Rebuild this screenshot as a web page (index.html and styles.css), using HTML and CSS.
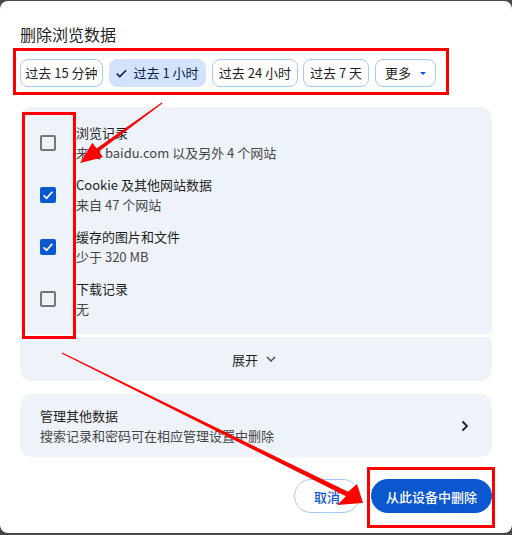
FILE: index.html
```html
<!DOCTYPE html>
<html lang="zh-CN">
<head>
<meta charset="utf-8">
<title>删除浏览数据</title>
<link rel="stylesheet" href="styles.css">
</head>
<body>
<div class="dialog">
  <h1 class="title">删除浏览数据</h1>
  <div class="chips">
    <div class="chip chip-15m">过去 15 分钟</div>
    <div class="chip chip-1h selected">
      <svg class="chip-check" width="11" height="9" viewBox="0 0 11 9"><polyline points="0.8,4.6 3.8,7.6 10.2,1.2" fill="none" stroke="#041e49" stroke-width="1.5"/></svg>
      过去 1 小时
    </div>
    <div class="chip chip-24h">过去 24 小时</div>
    <div class="chip chip-7d">过去 7 天</div>
    <div class="chip chip-more">更多
      <svg class="chip-caret" width="6" height="3" viewBox="0 0 6 3"><polygon points="0,0 6,0 3,3" fill="#0b57d0"/></svg>
    </div>
  </div>

  <div class="items">
    <div class="item">
      <span class="checkbox"></span>
      <div class="item-text">
        <div class="label">浏览记录</div>
        <div class="sub">来自 baidu.com 以及另外 4 个网站</div>
      </div>
    </div>
    <div class="item">
      <span class="checkbox checked"><svg width="16" height="16" viewBox="0 0 16 16"><polyline points="3.6,8.3 6.6,11.2 12.4,4.8" fill="none" stroke="#fff" stroke-width="1.7"/></svg></span>
      <div class="item-text">
        <div class="label">Cookie 及其他网站数据</div>
        <div class="sub">来自 47 个网站</div>
      </div>
    </div>
    <div class="item">
      <span class="checkbox checked"><svg width="16" height="16" viewBox="0 0 16 16"><polyline points="3.6,8.3 6.6,11.2 12.4,4.8" fill="none" stroke="#fff" stroke-width="1.7"/></svg></span>
      <div class="item-text">
        <div class="label">缓存的图片和文件</div>
        <div class="sub">少于 320 MB</div>
      </div>
    </div>
    <div class="item">
      <span class="checkbox"></span>
      <div class="item-text">
        <div class="label">下载记录</div>
        <div class="sub">无</div>
      </div>
    </div>
  </div>
  <div class="expand">展开
    <svg width="10" height="6" viewBox="0 0 10 6"><polyline points="1,1 5,5 9,1" fill="none" stroke="#474747" stroke-width="1.4"/></svg>
  </div>

  <div class="card">
    <div class="item-text">
      <div class="label">管理其他数据</div>
      <div class="sub">搜索记录和密码可在相应管理设置中删除</div>
    </div>
    <svg width="8" height="12" viewBox="0 0 8 12"><polyline points="1.5,1.5 6,6 1.5,10.5" fill="none" stroke="#1f1f1f" stroke-width="1.8"/></svg>
  </div>

  <div class="actions">
    <button class="btn btn-outline">取消</button>
    <button class="btn btn-primary">从此设备中删除</button>
  </div>
</div>

<svg class="annotations" width="512" height="535" viewBox="0 0 512 535">
  <g fill="none" stroke="#ff0000" stroke-width="3">
    <rect x="14.5" y="49.5" width="433" height="44"/>
    <rect x="23.5" y="113.5" width="51" height="224"/>
    <rect x="368.5" y="468.5" width="125" height="58"/>
  </g>
  <g fill="#ff0000">
    <polygon points="161.7,102.6 96.5,148.4 92.4,142.7 80,163 103,157.3 98.9,151.6 162.3,103.4"/>
    <polygon points="62.3,352.5 348.1,491.8 357,484 363,503 337,505 345.9,496.2 61.7,353.5"/>
  </g>
</svg>
</body>
</html>
```

FILE: styles.css
```css
html, body {
  margin: 0;
  padding: 0;
}
body {
  background: #474747;
  width: 512px;
  height: 535px;
  position: relative;
  overflow: hidden;
  font-family: "Noto Sans CJK SC", "Noto Sans", sans-serif;
  color: #1f1f1f;
}
.dialog {
  box-sizing: border-box;
  width: 512px;
  height: 532px;
  margin-top: 1px;
  background: #ffffff;
  border-radius: 8px;
  padding: 21px 20px 0;
  display: flex;
  flex-direction: column;
}
.title {
  margin: 0;
  font-size: 16px;
  line-height: 24px;
  font-weight: 400;
  color: #1f1f1f;
}
.chips {
  display: flex;
  gap: 6px;
  margin-top: 13px;
}
.chip {
  box-sizing: border-box;
  height: 28px;
  border: 1px solid #a8c7fa;
  border-radius: 8px;
  display: flex;
  align-items: center;
  justify-content: center;
  font-size: 13px;
  line-height: 18px;
  color: #1f1f1f;
  white-space: nowrap;
}
.chip.selected {
  background: #d3e3fd;
  border-color: #d3e3fd;
  color: #041e49;
}
.chip-check { margin-right: 6px; }
.chip-caret { margin-left: 9px; }
.chip-15m { width: 83px; }
.chip-1h { width: 97px; }
.chip-24h { width: 86px; }
.chip-7d { width: 66px; margin-left: -1px; }
.chip-more { width: 61px; }

.items {
  margin-top: 20px;
  background: #eef2f9;
  border-radius: 12px 12px 4px 4px;
  padding: 10px 0 9px;
}
.item {
  display: flex;
  align-items: center;
  gap: 20px;
  padding: 6px 20px;
}
.checkbox {
  box-sizing: border-box;
  width: 16px;
  height: 16px;
  border: 2px solid #747775;
  border-radius: 2px;
  flex: none;
  display: block;
  position: relative;
}
.checkbox.checked {
  background: #0b57d0;
  border-color: #0b57d0;
}
.checkbox.checked svg {
  position: absolute;
  left: -2px;
  top: -2px;
}
.label {
  font-size: 13px;
  line-height: 20px;
  color: #1f1f1f;
}
.sub {
  font-size: 13px;
  line-height: 20px;
  color: #474747;
}
.expand {
  margin-top: 3px;
  height: 44px;
  background: #eef2f9;
  border-radius: 4px 4px 12px 12px;
  display: flex;
  align-items: center;
  justify-content: center;
  gap: 8px;
  font-size: 13px;
  color: #1f1f1f;
  padding-right: 4px;
}
.card {
  margin-top: 13px;
  background: #eef2f9;
  border-radius: 12px;
  padding: 12px 23px 11px 20px;
  display: flex;
  align-items: center;
  justify-content: space-between;
}
.actions {
  margin-top: 22px;
  display: flex;
  justify-content: flex-end;
  gap: 11px;
}
.btn {
  box-sizing: border-box;
  height: 34px;
  border-radius: 17px;
  font-family: "Noto Sans CJK SC", "Noto Sans", sans-serif;
  font-size: 13px;
  font-weight: 500;
  padding: 0;
  cursor: pointer;
}
.btn-outline {
  width: 66px;
  background: #ffffff;
  border: 1px solid #a8c7fa;
  color: #0b57d0;
}
.btn-primary {
  width: 121px;
  background: #0b57d0;
  border: none;
  color: #ffffff;
}
.annotations {
  position: absolute;
  left: 0;
  top: 0;
  pointer-events: none;
}
```
